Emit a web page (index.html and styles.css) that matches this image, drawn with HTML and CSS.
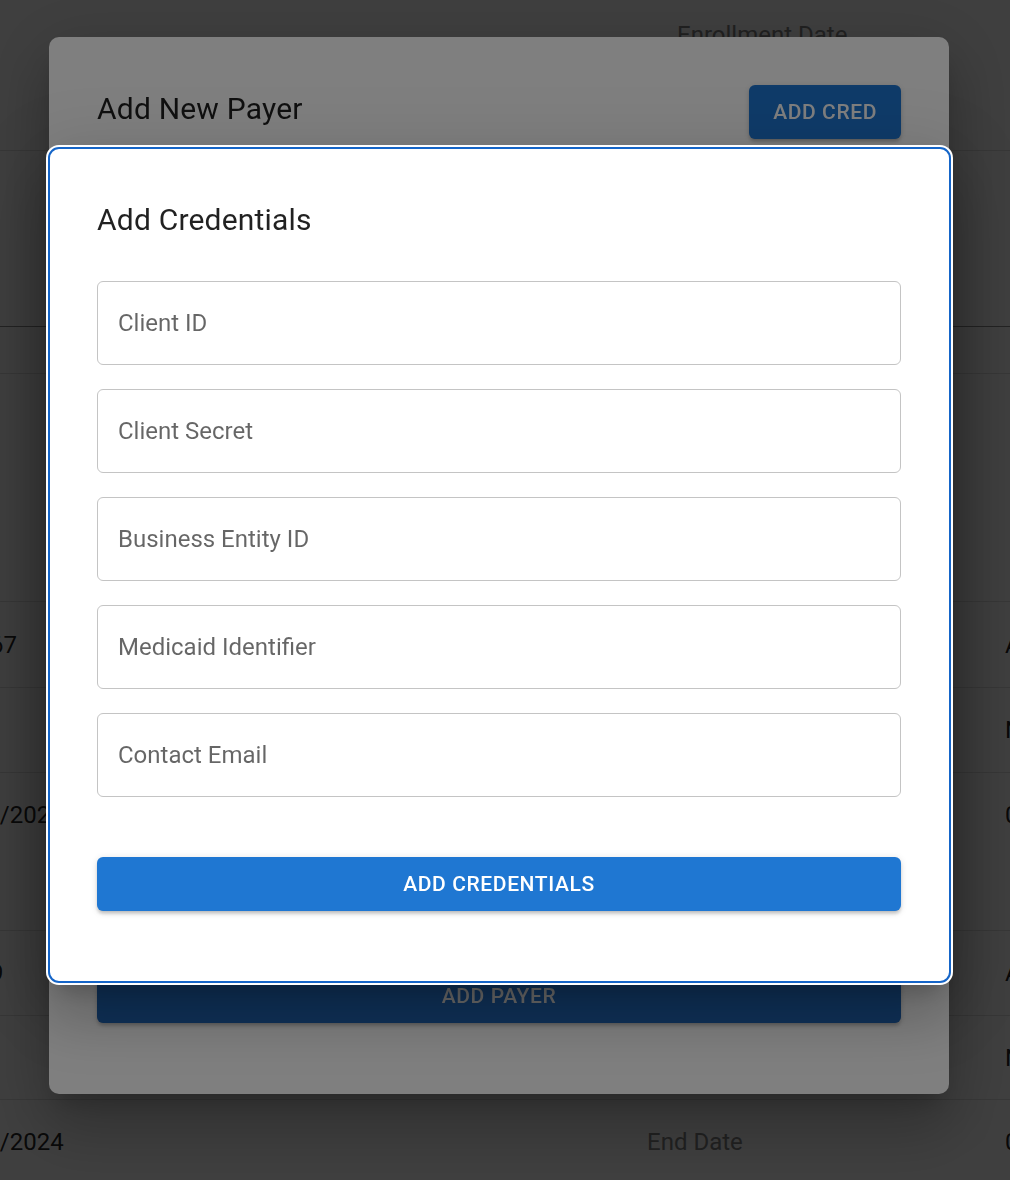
FILE: index.html
```html
<!DOCTYPE html>
<html lang="en">
<head>
<meta charset="utf-8">
<title>Add Credentials</title>
<link rel="stylesheet" href="styles.css">
</head>
<body>
<div class="page">
  <div class="row r0"><div class="cell c1"></div><div class="cell c2 head">Enrollment Date</div><div class="cell c3"></div></div>
  <div class="row r1 strong"><div class="cell c1"></div><div class="cell c2"></div><div class="cell c3"></div></div>
  <div class="row r2"><div class="cell c1"></div><div class="cell c2"></div><div class="cell c3"></div></div>
  <div class="row r3"><div class="cell c1"></div><div class="cell c2"></div><div class="cell c3"></div></div>
  <div class="row r4"><div class="cell c1">234567</div><div class="cell c2"></div><div class="cell c3">Active</div></div>
  <div class="row r5"><div class="cell c1"></div><div class="cell c2"></div><div class="cell c3">No</div></div>
  <div class="row r6 top"><div class="cell c1">01/01/2024</div><div class="cell c2"></div><div class="cell c3">01/01/2024</div></div>
  <div class="row r7"><div class="cell c1">56789</div><div class="cell c2"></div><div class="cell c3">Active</div></div>
  <div class="row r8"><div class="cell c1"></div><div class="cell c2"></div><div class="cell c3">No</div></div>
  <div class="row r9"><div class="cell c1">12/31/2024</div><div class="cell c2 head">End Date</div><div class="cell c3">01/01/2025</div></div>
</div>

<div class="backdrop"></div>

<div class="dialog outer">
  <div class="dialog-head">
    <h2 class="title">Add New Payer</h2>
    <button class="btn btn-primary">ADD CRED</button>
  </div>
  <div class="spacer"></div>
  <button class="btn btn-payer btn-block">ADD PAYER</button>
</div>

<div class="backdrop"></div>

<div class="dialog inner">
  <h2 class="title">Add Credentials</h2>
  <form class="fields">
    <div class="field"><label>Client ID</label></div>
    <div class="field"><label>Client Secret</label></div>
    <div class="field"><label>Business Entity ID</label></div>
    <div class="field"><label>Medicaid Identifier</label></div>
    <div class="field"><label>Contact Email</label></div>
  </form>
  <button class="btn btn-primary btn-block btn-submit">ADD CREDENTIALS</button>
</div>
</body>
</html>
```

FILE: styles.css
```css
* { box-sizing: border-box; }

html, body {
  margin: 0;
  padding: 0;
  width: 1010px;
  height: 1180px;
  overflow: hidden;
  background: #ffffff;
  font-family: Roboto, "Liberation Sans", Arial, sans-serif;
  color: rgba(0, 0, 0, 0.87);
}

/* background table */
.page {
  margin-left: -64px;
  width: 1200px;
  display: flex;
  flex-direction: column;
}
.row {
  display: flex;
  align-items: center;
  border-bottom: 1px solid #e0e0e0;
  font-size: 24px;
  line-height: 28px;
}
.row.strong { border-bottom-color: #8e8e8e; }
.row.top { align-items: flex-start; padding-top: 28px; }
.r0 { height: 151px; align-items: flex-start; padding-top: 21px; }
.r1 { height: 176px; }
.r2 { height: 47px; }
.r3 { height: 228px; }
.r4 { height: 86px; }
.r5 { height: 85px; }
.r6 { height: 158px; }
.r7 { height: 85px; }
.r8 { height: 84px; }
.r9 { height: 84px; border-bottom: none; }
.cell { white-space: nowrap; flex-shrink: 0; }
.c1 { width: 711px; }
.c2 { width: 358px; }
.c3 { flex: 1 0 auto; }
.head { color: #858585; }
.r0 .head { padding-left: 30px; }

/* overlays */
.backdrop {
  position: fixed;
  inset: 0;
  background: rgba(0, 0, 0, 0.5);
}

.dialog {
  position: absolute;
  background: #fff;
  display: flex;
  flex-direction: column;
  box-shadow: 0 16px 22px -10px rgba(0,0,0,0.2),
              0 36px 57px 4px rgba(0,0,0,0.14),
              0 13px 69px 12px rgba(0,0,0,0.12);
}

.outer {
  left: 49px;
  top: 37px;
  width: 900px;
  height: 1057px;
  border-radius: 10px;
  padding: 48px 48px 71px 48px;
}
.dialog-head {
  display: flex;
  justify-content: space-between;
  align-items: flex-start;
}
.title {
  margin: 0;
  font-size: 30px;
  line-height: 48px;
  font-weight: 400;
  color: rgba(0, 0, 0, 0.87);
  letter-spacing: 0.2px;
}
.spacer { flex: 1; }

.btn {
  border: none;
  border-radius: 6px;
  font-family: Roboto, "Liberation Sans", Arial, sans-serif;
  font-size: 21px;
  font-weight: 500;
  letter-spacing: 0.6px;
  height: 54px;
  padding: 0 24px;
  color: #fff;
  box-shadow: 0 3px 1.5px -3px rgba(0,0,0,0.2),
              0 3px 3px 0 rgba(0,0,0,0.14),
              0 1.5px 7.5px 0 rgba(0,0,0,0.12);
}
.btn-primary { background: #1f77d2; }
.btn-payer { background: #1e62b0; color: #d6d6d6; }
.btn-block { width: 100%; }

.inner {
  left: 48px;
  top: 147px;
  width: 903px;
  height: 836px;
  border: 2px solid #1565c8;
  border-radius: 11px;
  padding: 47px 48px 70px 47px;
  box-shadow: 0 0 0 2px #ffffff,
              0 16px 22px -10px rgba(0,0,0,0.2),
              0 36px 57px 4px rgba(0,0,0,0.14),
              0 13px 69px 12px rgba(0,0,0,0.12);
}
.fields {
  margin: 37px 0 0 0;
  display: flex;
  flex-direction: column;
  gap: 24px;
}
.field {
  height: 84px;
  border: 1px solid #c4c4c4;
  border-radius: 6px;
  display: flex;
  align-items: center;
  padding-left: 20px;
}
.field label {
  font-size: 24px;
  line-height: 28px;
  color: rgba(0, 0, 0, 0.6);
}
.btn-submit { margin-top: 60px; }
```
